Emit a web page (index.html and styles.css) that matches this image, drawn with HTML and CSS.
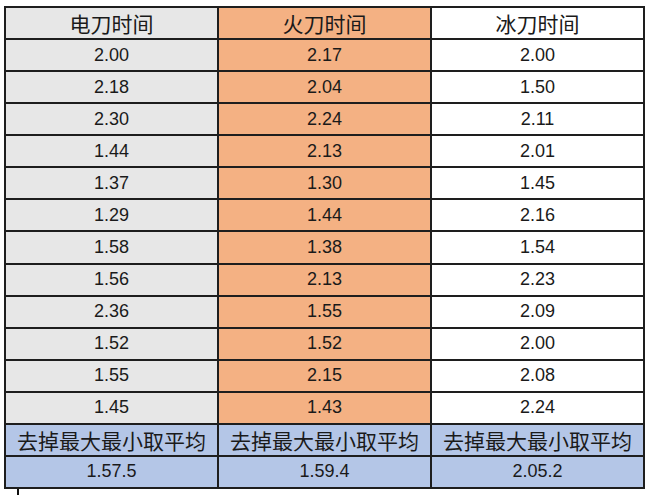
FILE: index.html
```html
<!DOCTYPE html>
<html lang="zh">
<head>
<meta charset="utf-8">
<title>刀时间</title>
<link rel="stylesheet" href="styles.css">
</head>
<body>
<div class="sheet">
  <div class="grid">
    <div class="cell gray head">电刀时间</div><div class="cell orange head">火刀时间</div><div class="cell white head">冰刀时间</div>
    <div class="cell gray">2.00</div><div class="cell orange">2.17</div><div class="cell white">2.00</div>
    <div class="cell gray">2.18</div><div class="cell orange">2.04</div><div class="cell white">1.50</div>
    <div class="cell gray">2.30</div><div class="cell orange">2.24</div><div class="cell white">2.11</div>
    <div class="cell gray">1.44</div><div class="cell orange">2.13</div><div class="cell white">2.01</div>
    <div class="cell gray">1.37</div><div class="cell orange">1.30</div><div class="cell white">1.45</div>
    <div class="cell gray">1.29</div><div class="cell orange">1.44</div><div class="cell white">2.16</div>
    <div class="cell gray">1.58</div><div class="cell orange">1.38</div><div class="cell white">1.54</div>
    <div class="cell gray">1.56</div><div class="cell orange">2.13</div><div class="cell white">2.23</div>
    <div class="cell gray">2.36</div><div class="cell orange">1.55</div><div class="cell white">2.09</div>
    <div class="cell gray">1.52</div><div class="cell orange">1.52</div><div class="cell white">2.00</div>
    <div class="cell gray">1.55</div><div class="cell orange">2.15</div><div class="cell white">2.08</div>
    <div class="cell gray">1.45</div><div class="cell orange">1.43</div><div class="cell white">2.24</div>
    <div class="cell blue head">去掉最大最小取平均</div><div class="cell blue head">去掉最大最小取平均</div><div class="cell blue head">去掉最大最小取平均</div>
    <div class="cell blue">1.57.5</div><div class="cell blue">1.59.4</div><div class="cell blue">2.05.2</div>
  </div>
  <div class="cursor"></div>
</div>
</body>
</html>
```

FILE: styles.css
```css
html, body {
  margin: 0;
  padding: 0;
  background: #ffffff;
}
body {
  width: 650px;
  height: 495px;
  overflow: hidden;
}
.sheet {
  position: relative;
  padding: 6px 0 0 4px;
}
.grid {
  width: 641px;
  height: 483px;
  box-sizing: border-box;
  background: #1e1e1e;
  padding: 2px;
  display: grid;
  grid-template-columns: repeat(3, 1fr);
  grid-template-rows: repeat(15, 1fr);
  gap: 2px;
}
.cell {
  display: flex;
  align-items: center;
  justify-content: center;
  font-family: "Liberation Sans", "Noto Sans CJK SC", sans-serif;
  font-size: 18px;
  color: #1a1a1a;
}
.head {
  font-family: "Noto Sans CJK SC", sans-serif;
  font-size: 21px;
}
.gray { background: #e7e7e7; }
.orange { background: #f4b183; }
.white { background: #ffffff; }
.blue { background: #b4c6e7; }
.cursor {
  position: absolute;
  left: 17px;
  top: 489px;
  width: 2px;
  height: 6px;
  background: #111;
}
```
